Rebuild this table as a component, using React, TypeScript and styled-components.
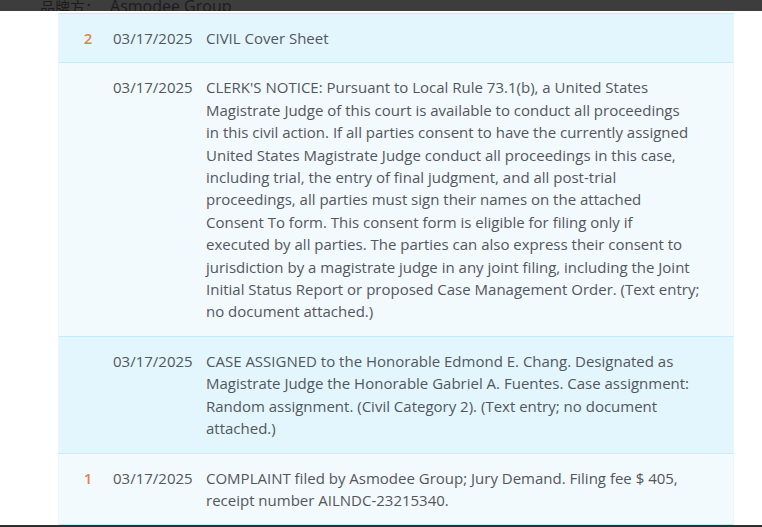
import React from "react";
import styled, { createGlobalStyle } from "styled-components";

const Global = createGlobalStyle`
  html, body { margin: 0; padding: 0; background: #ffffff; }
  body { font-family: "Open Sans", "Noto Sans", "Noto Sans CJK SC", sans-serif; overflow: hidden; }
`;

const Page = styled.div`
  width: 762px;
  height: 527px;
  display: flex;
  flex-direction: column;
  overflow: hidden;
`;

const TopBar = styled.div`
  height: 11px;
  flex: none;
  background: #3d3d3d;
  overflow: hidden;
  display: flex;
  align-items: flex-end;
  padding-left: 40px;
`;

const TopLabel = styled.span`
  font-family: "Noto Sans CJK SC", sans-serif;
  font-size: 15px;
  line-height: 15px;
  color: #1c1c1c;
  white-space: nowrap;
  margin-bottom: -3px;
  margin-right: 10px;
`;

const TopValue = styled(TopLabel)`
  font-family: "Open Sans", sans-serif;
  font-size: 16px;
`;

const Table = styled.div`
  margin: 2px 0 0 58px;
  width: 674px;
  flex: 1;
  display: flex;
  flex-direction: column;
  border-top: 1px solid #c4ecfc;
  border-left: 1px solid #e8f7fe;
  border-right: 1px solid #e8f7fe;
`;

const Row = styled.div<{ $shade: boolean }>`
  display: grid;
  grid-template-columns: 54px 93px 1fr;
  padding: 13px 0 13px 0;
  background: ${(p) => (p.$shade ? "#e3f6fe" : "#f2fafe")};
  border-bottom: 1px solid #c4ecfc;
  font-size: 15px;
  line-height: 22.4px;
  color: #52575d;
`;

const Num = styled.div`
  color: #e0834f;
  font-weight: 600;
  text-align: center;
  padding-left: 4px;
`;

const DateCell = styled.div`
  white-space: nowrap;
`;

const TextCell = styled.div`
  white-space: nowrap;
`;

const Line = styled.div``;

const BottomBar = styled.div`
  height: 2px;
  flex: none;
  background: #2f2f2f;
`;

const rows: { num?: string; date: string; lines: string[] }[] = [
  { num: "2", date: "03/17/2025", lines: ["CIVIL Cover Sheet"] },
  {
    date: "03/17/2025",
    lines: [
      "CLERK'S NOTICE: Pursuant to Local Rule 73.1(b), a United States",
      "Magistrate Judge of this court is available to conduct all proceedings",
      "in this civil action. If all parties consent to have the currently assigned",
      "United States Magistrate Judge conduct all proceedings in this case,",
      "including trial, the entry of final judgment, and all post-trial",
      "proceedings, all parties must sign their names on the attached",
      "Consent To form. This consent form is eligible for filing only if",
      "executed by all parties. The parties can also express their consent to",
      "jurisdiction by a magistrate judge in any joint filing, including the Joint",
      "Initial Status Report or proposed Case Management Order. (Text entry;",
      "no document attached.)",
    ],
  },
  {
    date: "03/17/2025",
    lines: [
      "CASE ASSIGNED to the Honorable Edmond E. Chang. Designated as",
      "Magistrate Judge the Honorable Gabriel A. Fuentes. Case assignment:",
      "Random assignment. (Civil Category 2). (Text entry; no document",
      "attached.)",
    ],
  },
  {
    num: "1",
    date: "03/17/2025",
    lines: [
      "COMPLAINT filed by Asmodee Group; Jury Demand. Filing fee $ 405,",
      "receipt number AILNDC-23215340.",
    ],
  },
];

export default function App() {
  return (
    <Page>
      <Global />
      <TopBar>
        <TopLabel>品牌方：</TopLabel>
        <TopValue>Asmodee Group</TopValue>
      </TopBar>
      <Table>
        {rows.map((r, i) => (
          <Row key={i} $shade={i % 2 === 0}>
            <Num>{r.num ?? ""}</Num>
            <DateCell>{r.date}</DateCell>
            <TextCell>
              {r.lines.map((l, j) => (
                <Line key={j}>{l}</Line>
              ))}
            </TextCell>
          </Row>
        ))}
      </Table>
      <BottomBar />
    </Page>
  );
}
